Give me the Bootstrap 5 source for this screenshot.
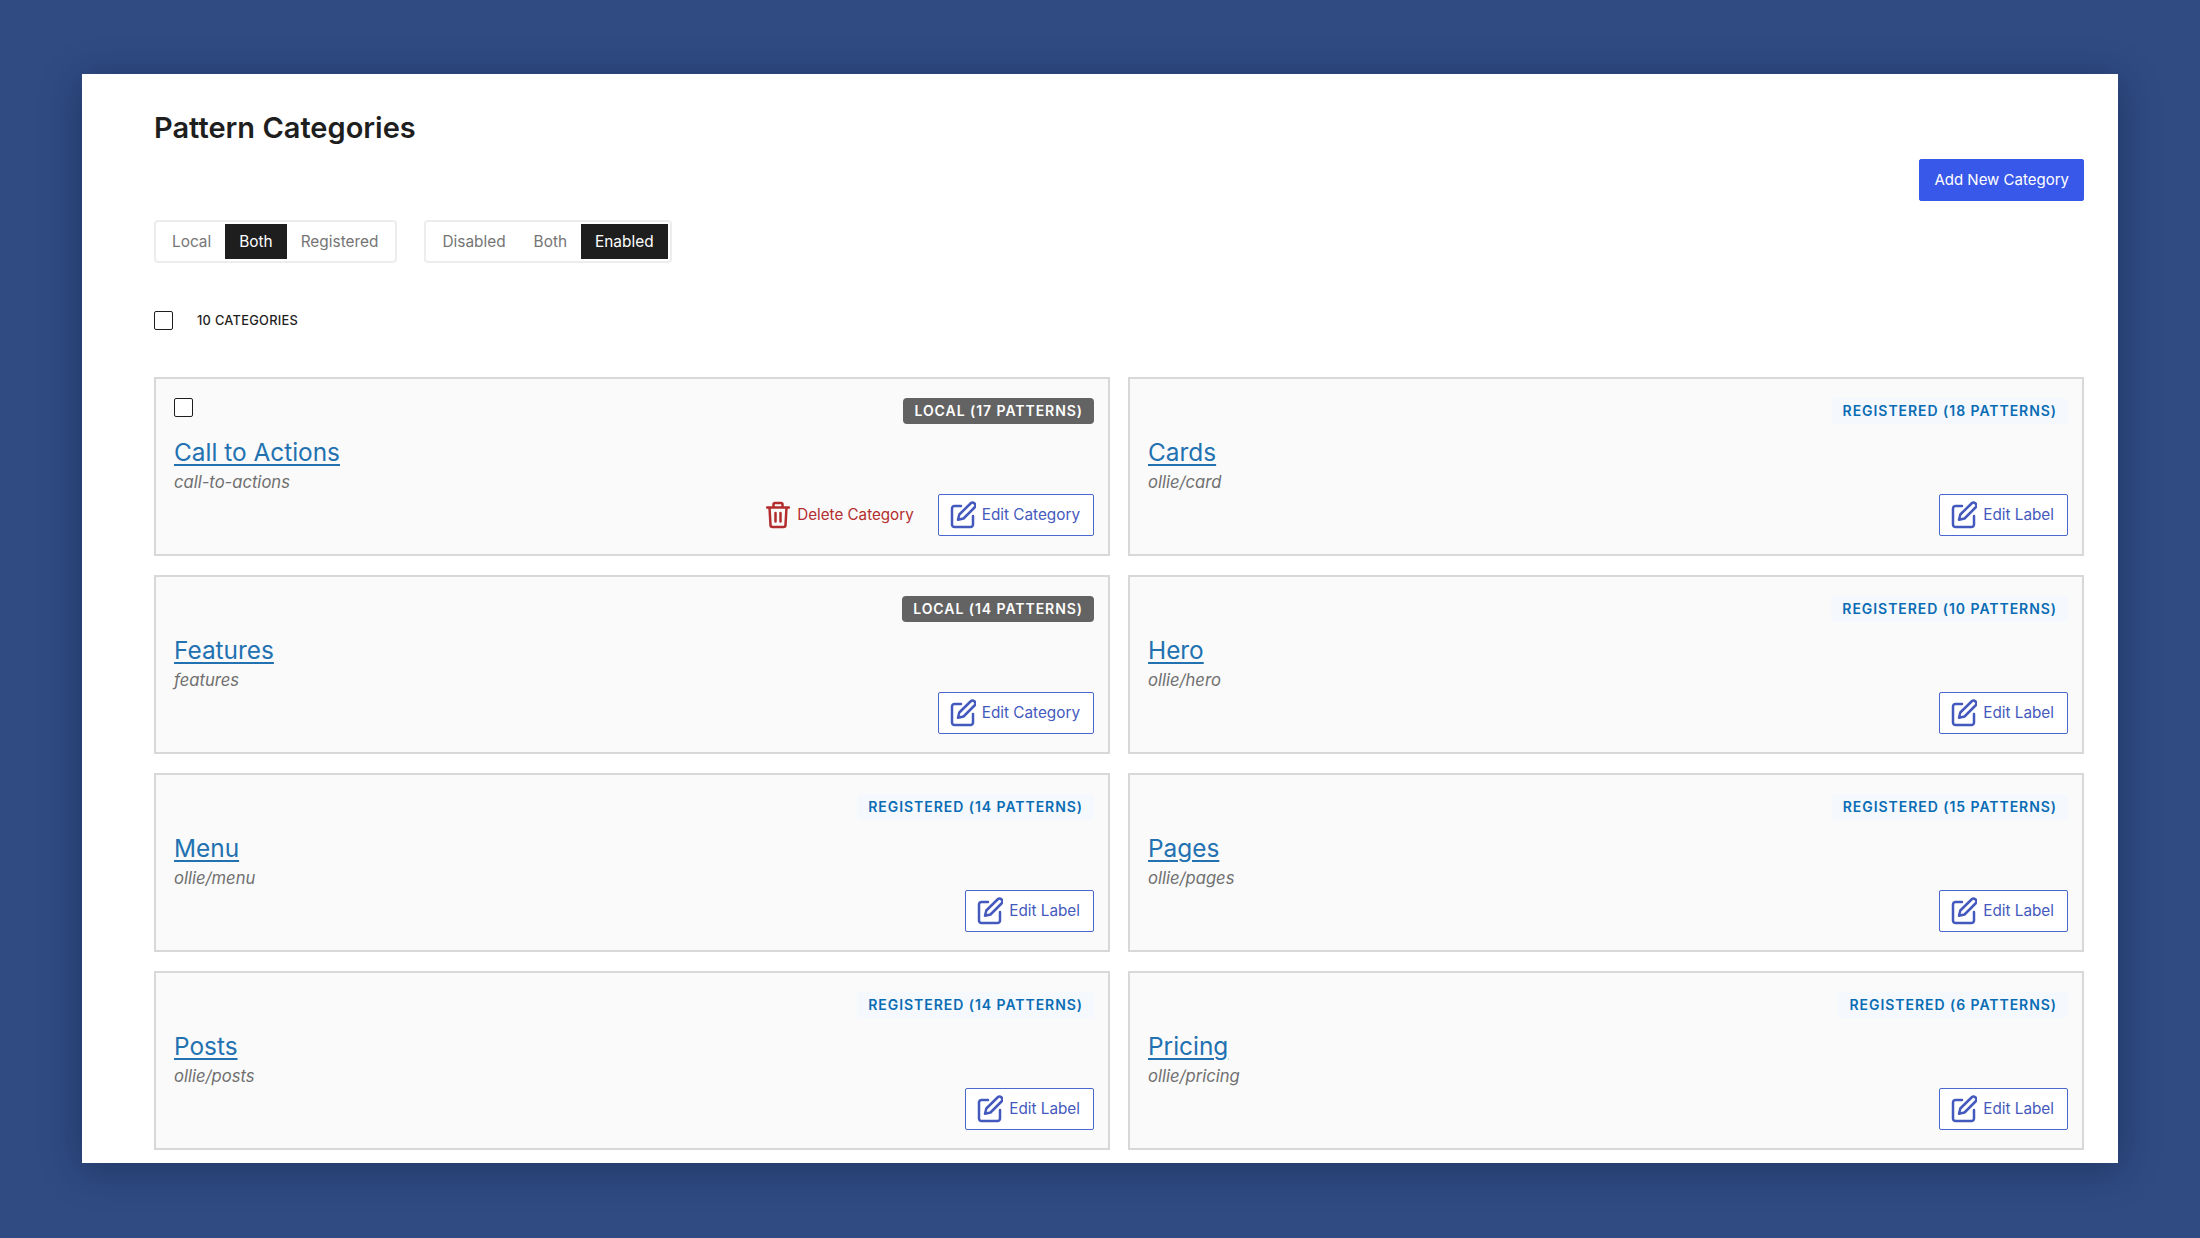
<!DOCTYPE html>
<html lang="en">
<head>
<meta charset="utf-8">
<title>Pattern Categories</title>
<link href="https://cdn.jsdelivr.net/npm/bootstrap@5.3.0/dist/css/bootstrap.min.css" rel="stylesheet">
<style>
html, body { height: 100%; }
body { background: #2f4b82; font-family: Inter, "Liberation Sans", sans-serif; color: #1e1e1e; padding: 74px 82px 75px; overflow: hidden; }
.app-window { background: #fff; height: 1089px; padding: 0 34px 0 72px; box-shadow: 0 6px 36px rgba(10, 20, 50, .38); overflow: hidden; }
.page-title { font-size: 29px; line-height: 40px; font-weight: 600; margin: 34px 0 0; }
.add-btn { background: #3858e9; border-color: #3858e9; color: #fff; font-size: 15px; height: 42px; border-radius: 2px; padding: 0 14px; margin-top: 85px; }
.add-btn:hover { background: #3858e9; color: #fff; }
.toolbar { margin-top: 72px; gap: 27px; }
.seg { border: 2px solid #eceded; border-radius: 4px; padding: 2px; height: 43px; align-items: stretch; }
.seg:first-child { padding-right: 3px; }
.seg-item { font-size: 15.4px; color: #757575; padding: 0 14px; display: flex; align-items: center; border: 0; background: transparent; }
.seg-item.on { background: #1e1e1e; color: #fff; }
.tick.form-check-input[type=checkbox] { width: 19px; height: 19px; border: 1.5px solid #1e1e1e; border-radius: 2px; margin: 0; background-color: #fff; }
.count-row { margin-top: 48px; gap: 24px; height: 19px; }
.count-text { font-size: 12.8px; font-weight: 500; letter-spacing: .3px; }
.cat-grid { grid-template-columns: 956px 956px; column-gap: 18px; row-gap: 19px; margin-top: 47px; }
.cat-card { height: 179px; background: #fafafa; border: 2px solid #d8d8d8; border-radius: 0; padding: 19px 14px 18px 18px; }
.top-row { height: 26px; }
.kind { font-size: 14px; font-weight: 600; letter-spacing: .95px; line-height: 26px; padding: 0 11px; border-radius: 4px; text-transform: uppercase; }
.kind-local { background: #636363; color: #fff; }
.kind-reg { background: #f5f9fd; color: #0a6cb4; }
.cat-name { display: block; font-size: 24.4px; line-height: 36px; margin-top: 10px; color: #2271b1; width: fit-content; text-decoration-thickness: 2px; text-underline-offset: 3px; }
.cat-slug { font-size: 16.6px; line-height: 24px; font-style: italic; color: #6f6f6f; }
.action-row { gap: 24px; }
.del-btn { color: #b32d2e; font-size: 15.2px; gap: 7px; padding: 0; border: 0; background: none; }
.edit-btn { height: 42px; background: #fff; border: 1.5px solid #4a66cf; border-radius: 2px; color: #4459bd; font-size: 15.3px; padding: 0 13px 0 9px; gap: 6px; }
.edit-btn:hover { background: #fff; color: #4459bd; border-color: #4a66cf; }
</style>
</head>
<body>
<main class="app-window">
  <div class="d-flex justify-content-between align-items-start">
    <div>
      <h1 class="page-title">Pattern Categories</h1>
      <div class="toolbar d-flex">
        <div class="seg d-flex">
          <button type="button" class="seg-item">Local</button>
          <button type="button" class="seg-item on">Both</button>
          <button type="button" class="seg-item">Registered</button>
        </div>
        <div class="seg d-flex">
          <button type="button" class="seg-item">Disabled</button>
          <button type="button" class="seg-item">Both</button>
          <button type="button" class="seg-item on">Enabled</button>
        </div>
      </div>
    </div>
    <button type="button" class="btn add-btn">Add New Category</button>
  </div>

  <div class="count-row d-flex align-items-center">
    <input class="form-check-input tick" type="checkbox" aria-label="Select all">
    <span class="count-text">10 CATEGORIES</span>
  </div>

  <svg width="0" height="0" class="d-block position-absolute">
    <defs>
      <symbol id="ic-edit" viewBox="0 0 28 28">
        <path d="M13 5H6.500A2.500 2.500 0 0 0 4 7.500v16A2.500 2.500 0 0 0 6.500 26h16a2.500 2.500 0 0 0 2.500-2.500V15" fill="none" stroke="currentColor" stroke-width="2.500" stroke-linecap="round" stroke-linejoin="round"/>
        <path d="M22.500 2.500a2.800 2.800 0 0 1 4 4L15.500 17.500l-5.500 1.300 1.300-5.300Z" fill="none" stroke="currentColor" stroke-width="2.500" stroke-linecap="round" stroke-linejoin="round"/>
      </symbol>
      <symbol id="ic-trash" viewBox="0 0 24 28">
        <path d="M1 6.500h22M7.500 6.500V3.500a1.500 1.500 0 0 1 1.500-1.500h6a1.500 1.500 0 0 1 1.500 1.500v3M3.500 6.500l1 17.500a2 2 0 0 0 2 2h11a2 2 0 0 0 2-2l1-17.500M9.500 12v8.500M14.500 12v8.500" fill="none" stroke="currentColor" stroke-width="2.500" stroke-linecap="round" stroke-linejoin="round"/>
      </symbol>
    </defs>
  </svg>

  <div class="cat-grid d-grid">
    <section class="cat-card">
      <div class="top-row d-flex justify-content-between align-items-start">
        <input class="form-check-input tick" type="checkbox" aria-label="Select Call to Actions">
        <span class="kind kind-local">Local (17 patterns)</span>
      </div>
      <a href="#" class="cat-name">Call to Actions</a>
      <div class="cat-slug">call-to-actions</div>
      <div class="action-row d-flex justify-content-end align-items-center">
        <button type="button" class="del-btn d-flex align-items-center"><svg width="24" height="28"><use href="#ic-trash"/></svg>Delete Category</button>
        <button type="button" class="btn edit-btn d-flex align-items-center"><svg width="28" height="28"><use href="#ic-edit"/></svg>Edit Category</button>
      </div>
    </section>
    <section class="cat-card">
      <div class="top-row d-flex justify-content-end align-items-start"><span class="kind kind-reg">Registered (18 patterns)</span></div>
      <a href="#" class="cat-name">Cards</a>
      <div class="cat-slug">ollie/card</div>
      <div class="action-row d-flex justify-content-end align-items-center">
        <button type="button" class="btn edit-btn d-flex align-items-center"><svg width="28" height="28"><use href="#ic-edit"/></svg>Edit Label</button>
      </div>
    </section>
    <section class="cat-card">
      <div class="top-row d-flex justify-content-end align-items-start"><span class="kind kind-local">Local (14 patterns)</span></div>
      <a href="#" class="cat-name">Features</a>
      <div class="cat-slug">features</div>
      <div class="action-row d-flex justify-content-end align-items-center">
        <button type="button" class="btn edit-btn d-flex align-items-center"><svg width="28" height="28"><use href="#ic-edit"/></svg>Edit Category</button>
      </div>
    </section>
    <section class="cat-card">
      <div class="top-row d-flex justify-content-end align-items-start"><span class="kind kind-reg">Registered (10 patterns)</span></div>
      <a href="#" class="cat-name">Hero</a>
      <div class="cat-slug">ollie/hero</div>
      <div class="action-row d-flex justify-content-end align-items-center">
        <button type="button" class="btn edit-btn d-flex align-items-center"><svg width="28" height="28"><use href="#ic-edit"/></svg>Edit Label</button>
      </div>
    </section>
    <section class="cat-card">
      <div class="top-row d-flex justify-content-end align-items-start"><span class="kind kind-reg">Registered (14 patterns)</span></div>
      <a href="#" class="cat-name">Menu</a>
      <div class="cat-slug">ollie/menu</div>
      <div class="action-row d-flex justify-content-end align-items-center">
        <button type="button" class="btn edit-btn d-flex align-items-center"><svg width="28" height="28"><use href="#ic-edit"/></svg>Edit Label</button>
      </div>
    </section>
    <section class="cat-card">
      <div class="top-row d-flex justify-content-end align-items-start"><span class="kind kind-reg">Registered (15 patterns)</span></div>
      <a href="#" class="cat-name">Pages</a>
      <div class="cat-slug">ollie/pages</div>
      <div class="action-row d-flex justify-content-end align-items-center">
        <button type="button" class="btn edit-btn d-flex align-items-center"><svg width="28" height="28"><use href="#ic-edit"/></svg>Edit Label</button>
      </div>
    </section>
    <section class="cat-card">
      <div class="top-row d-flex justify-content-end align-items-start"><span class="kind kind-reg">Registered (14 patterns)</span></div>
      <a href="#" class="cat-name">Posts</a>
      <div class="cat-slug">ollie/posts</div>
      <div class="action-row d-flex justify-content-end align-items-center">
        <button type="button" class="btn edit-btn d-flex align-items-center"><svg width="28" height="28"><use href="#ic-edit"/></svg>Edit Label</button>
      </div>
    </section>
    <section class="cat-card">
      <div class="top-row d-flex justify-content-end align-items-start"><span class="kind kind-reg">Registered (6 patterns)</span></div>
      <a href="#" class="cat-name">Pricing</a>
      <div class="cat-slug">ollie/pricing</div>
      <div class="action-row d-flex justify-content-end align-items-center">
        <button type="button" class="btn edit-btn d-flex align-items-center"><svg width="28" height="28"><use href="#ic-edit"/></svg>Edit Label</button>
      </div>
    </section>
  </div>
</main>
<script src="https://cdn.jsdelivr.net/npm/bootstrap@5.3.0/dist/js/bootstrap.bundle.min.js"></script>
</body>
</html>
